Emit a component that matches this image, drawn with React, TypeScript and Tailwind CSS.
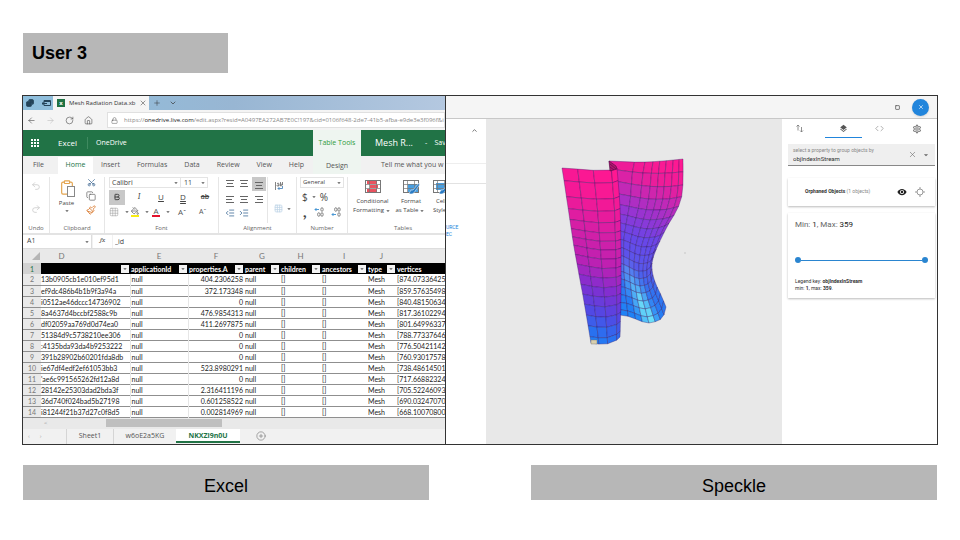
import React from 'react';
import {
  ArrowLeft, ArrowRight, Bold, ChevronDown, ChevronUp, CirclePlus, Clipboard, Code,
  Copy, Grid3x3, Home, Indent, Lock, Outdent, Paintbrush, PaintBucket, Plus, Redo2, RotateCw,
  Scissors, Square, Undo2, X,
} from 'lucide-react';
import { MdLayers, MdOutlineSettings, MdVisibility, MdArrowDropDown } from 'react-icons/md';

type Point = [number, number];

// ---------- sheet data ----------

const columns = [
  { letter: 'D', name: '', width: 'w-[89px]' },
  { letter: 'E', name: 'applicationId', width: 'w-[58px]' },
  { letter: 'F', name: 'properties.A', width: 'w-[56px]' },
  { letter: 'G', name: 'parent', width: 'w-[36px]' },
  { letter: 'H', name: 'children', width: 'w-[41px]' },
  { letter: 'I', name: 'ancestors', width: 'w-[46px]' },
  { letter: 'J', name: 'type', width: 'w-[29px]' },
  { letter: '', name: 'vertices', width: '' },
];

const rows = [
  ['13b0905cb1e010ef95d1', '404.2306258', '[874.07336425'],
  ['ef9dc486b4b1b9f3a94a', '372.173348', '[859.57635498'],
  ['i0512ae46dccc14736902', '0', '[840.48150634'],
  ['8a4637d4bccbf2588c9b', '476.9854313', '[817.36102294'],
  ['df02059aa769d0d74ea0', '411.2697875', '[801.64996337'],
  ['51384d9c5738210ee306', '0', '[788.77337646'],
  [':4135bda93da4b9253222', '0', '[776.50421142'],
  ['391b28902b60201fda8db', '0', '[760.93017578'],
  ['ie67df4edf2ef61053bb3', '523.8980291', '[738.48614501'],
  ["'ae6c991565262fd12a8d", '0', '[717.66882324'],
  ['28142e25303dad2bda3f', '2.316411196', '[705.52246093'],
  ['36d740f024bad5b27198', '0.601258522', '[690.03247070'],
  ['i81244f21b37d27c0f8d5', '0.002814969', '[668.10070800'],
];

const ribbonTabs = ['Insert', 'Formulas', 'Data', 'Review', 'View', 'Help'];

// ---------- mesh drawing ----------

// Catmull-Rom through evenly weighted points
const curve = (pts: Point[], t: number): Point => {
  const n = pts.length - 1;
  const i = Math.min(Math.floor(t * n), n - 1);
  const f = t * n - i;
  const p0 = pts[Math.max(i - 1, 0)];
  const p1 = pts[i];
  const p2 = pts[i + 1];
  const p3 = pts[Math.min(i + 2, n)];
  const at = (k: 0 | 1) =>
    0.5 * (2 * p1[k] + (p2[k] - p0[k]) * f + (2 * p0[k] - 5 * p1[k] + 4 * p2[k] - p3[k]) * f * f
      + (3 * p1[k] - p0[k] - 3 * p2[k] + p3[k]) * f * f * f);
  return [at(0), at(1)];
};

const mix = (stops: [number, number[]][], t: number) => {
  let i = 0;
  while (i < stops.length - 2 && t > stops[i + 1][0]) i++;
  const [a, ca] = stops[i];
  const [b, cb] = stops[i + 1];
  const f = Math.max(0, Math.min(1, (t - a) / (b - a)));
  return ca.map((c, k) => c + (cb[k] - c) * f);
};

interface Patch {
  left: Point[];
  right: Point[];
  top: Point[];
  bottom: Point[];
  us: number[];
  vs: number[];
  fan: number;
  color: (x: number, y: number) => number[];
}

const surfacePoint = (p: Patch, u0: number, v: number): Point => {
  // columns gather towards the right at the top and even out halfway down
  const u = Math.pow(u0, 1 - p.fan * Math.max(0, 1 - v * 2));
  const l = curve(p.left, v);
  const r = curve(p.right, v);
  const t = curve(p.top, u);
  const b = curve(p.bottom, u);
  const [tl, tr, bl, br] = [p.top[0], p.top[p.top.length - 1], p.bottom[0], p.bottom[p.bottom.length - 1]];
  const at = (k: 0 | 1) =>
    (1 - u) * l[k] + u * r[k] + (1 - v) * t[k] + v * b[k]
    - ((1 - u) * (1 - v) * tl[k] + u * (1 - v) * tr[k] + (1 - u) * v * bl[k] + u * v * br[k]);
  return [at(0), at(1)];
};

const steps = (n: number) => Array.from({ length: n + 1 }, (_, i) => i / n);

const front: Patch = {
  left: [[562, 168], [568, 207], [574, 247], [583, 296], [591, 343]],
  right: [[617, 168], [620, 207], [621, 250], [621, 295], [620, 337]],
  top: [[562, 168], [576, 169], [590, 170], [607, 171], [617, 168]],
  bottom: [[591, 343], [598, 344], [606, 344], [614, 342], [620, 337]],
  us: [0, 0.28, 0.55, 0.84, 1],
  vs: [0, 0.1, 0.19, 0.26, 0.33, 0.39, 0.44, 0.49, 0.54, 0.59, 0.64, 0.69, 0.74, 0.79, 0.84, 0.89, 0.95, 1],
  fan: 0,
  color: (x, y) =>
    mix([
      [168, [255, 24, 145]],
      [200, [242, 25, 151]],
      [235, [208, 32, 168]],
      [260, [190, 32, 178]],
      [285, [130, 46, 208]],
      [310, [82, 72, 228]],
      [330, [42, 112, 240]],
      [344, [30, 132, 246]],
    ], y - (x - 590) * 0.35),
};

const back: Patch = {
  left: [[609, 161], [616, 200], [618, 240], [619, 280], [620, 315]],
  right: [[683, 159], [683, 178], [682, 195], [677, 210], [668, 225], [659, 243], [653, 258], [652, 270], [655, 282], [661, 295], [666, 307]],
  top: [[609, 161], [627, 162], [645, 162], [663, 161], [683, 159]],
  bottom: [[620, 315], [631, 317], [640, 321], [649, 323], [657, 321], [663, 317], [666, 307]],
  us: steps(8),
  vs: [0, 0.07, 0.14, 0.21, 0.275, 0.335, 0.39, 0.44, 0.49, 0.54, 0.59, 0.64, 0.69, 0.74, 0.79, 0.84, 0.89, 0.945, 1],
  fan: 0.5,
  color: (x, y) => {
    const base = mix([
      [158, [255, 25, 145]],
      [180, [238, 28, 152]],
      [200, [198, 40, 180]],
      [222, [150, 52, 210]],
      [245, [105, 70, 232]],
      [275, [88, 88, 235]],
      [295, [50, 115, 240]],
      [322, [32, 130, 245]],
    ], y - (x - 660) * 0.35);
    // light streak running down the fold
    const d = Math.abs(x - (634 + (y - 285) * 0.45));
    const k = Math.max(0, 1 - d / 11) * Math.max(0, Math.min(1, (y - 255) / 55));
    return base.map((c, i) => c + ([120, 240, 250][i] - c) * k);
  },
};

const PatchCells: React.FC<{ patch: Patch }> = ({ patch }) => (
  <g stroke="#2a1060" strokeWidth="0.5" strokeOpacity="0.65" strokeLinejoin="round">
    {patch.vs.slice(1).map((v, r) =>
      patch.us.slice(1).map((u, c) => {
        const pts = [
          surfacePoint(patch, patch.us[c], patch.vs[r]),
          surfacePoint(patch, u, patch.vs[r]),
          surfacePoint(patch, u, v),
          surfacePoint(patch, patch.us[c], v),
        ];
        const cx = pts.reduce((s, p) => s + p[0], 0) / 4;
        const cy = pts.reduce((s, p) => s + p[1], 0) / 4;
        const rgb = patch.color(cx, cy).map(Math.round).join(',');
        return (
          <polygon key={`${r}-${c}`} fill={`rgb(${rgb})`} points={pts.map(p => `${p[0].toFixed(1)},${p[1].toFixed(1)}`).join(' ')} />
        );
      })
    )}
  </g>
);

const MeshDrawing: React.FC = () => (
  <svg viewBox="486 119 296 325" className="w-full h-full" role="img" aria-label="Radiation mesh">
    <PatchCells patch={back} />
    <PatchCells patch={front} />
    <path d="M609 161 L616 166 L617 169 L610 171 Z" fill="#b3146f" stroke="#4d0f45" strokeWidth="0.6" />
    <path d="M610 164 L616 169 M610 167 L614 170" stroke="#4d0f45" strokeWidth="0.6" />
    <path d="M591 340 h6 v4 h-6 z" fill="#d8cfae" stroke="#6b6b6b" strokeWidth="0.4" />
    <circle cx="685" cy="253" r="1" fill="#d2d2d2" />
  </svg>
);

// ---------- excel ----------

const Caret = () => <MdArrowDropDown className="size-2 shrink-0 text-[#555]" />;

const AlignLines: React.FC<{ d: string }> = ({ d }) => (
  <svg viewBox="0 0 10 10" className="size-[10px]" stroke="#666" strokeWidth="1" fill="none">
    <path d={d} />
  </svg>
);

const TableIcon: React.FC<{ kind: 'conditional' | 'format' | 'cell' }> = ({ kind }) => (
  <svg viewBox="0 0 18 16" className="w-[18px] h-4 shrink-0" fill="none">
    <rect x="1.5" y="1.5" width="15" height="12" fill="#fff" stroke="#777" />
    {kind === 'conditional' ? (
      <path d="M3 2h10v3h-10z M6 6h8v3h-8z M3 10h10v3h-10z" fill="#e8525f" />
    ) : (
      <path d={kind === 'format' ? 'M6 5h10v8h-10z' : 'M4 4h10v7h-10z'} fill="#4a9fe0" />
    )}
    <path d="M1.5 5.5h15M1.5 9.5h15M5.5 1.5v12M12.5 1.5v12" stroke="#777" strokeWidth="0.7" />
    {kind !== 'conditional' && (
      <path d="M17 4l-6 7-2 0-2 3.5q4 1.5 5.5-1.5l5-7z" fill="#2b7cc4" stroke="#fff" strokeWidth="0.5" />
    )}
  </svg>
);

const DecimalIcon: React.FC<{ flip?: boolean }> = ({ flip }) => (
  <svg viewBox="0 0 10 10" className="size-[10px]" fill="none" strokeWidth="0.9">
    <path d={flip ? 'M1 7.5h4M2.5 6L1 7.5 2.5 9' : 'M5 2.5H1M2.5 1L1 2.5 2.5 4'} stroke="#3a8fd0" />
    <ellipse cx="8" cy="2.5" rx="1.2" ry="1.8" stroke="#777" />
    <ellipse cx="8" cy="7.5" rx="1.2" ry="1.8" stroke="#777" />
    <ellipse cx="4.8" cy={flip ? 2.5 : 7.5} rx="1.2" ry="1.8" stroke="#777" />
  </svg>
);

const WrapIcon = () => (
  <svg viewBox="0 0 10 10" className="size-[10px]" fill="none" stroke="#666" strokeWidth="0.8">
    <path d="M1.5 1v8M8.500 1v3" />
    <path d="M3 2.500q2-1 2 .5v2M5 4q-2-.3-2 .7t2 0M6.500 1v4q1.500.3 1.500-1t-1.500-1" />
    <path d="M8.500 5v2.500H4M5.500 6L4 7.500 5.500 9" stroke="#3a7ab5" />
  </svg>
);

const Group: React.FC<{ label: string; className: string; children: React.ReactNode }> = ({ label, className, children }) => (
  <div className={`flex flex-col shrink-0 border-r border-[#e6e6e6] ${className}`}>
    <div className="grow flex min-h-0">{children}</div>
    <p className="h-[10px] shrink-0 leading-[10px] text-center text-[6px] text-[#666]">{label}</p>
  </div>
);

const Ribbon: React.FC = () => (
  <div className="flex h-[61px] shrink-0 bg-white pt-[3px] border-b-2 border-[#e3e3e3] overflow-hidden text-[#444]">
    <Group label="Undo" className="w-[27px]">
      <div className="flex flex-col items-center gap-[13px] w-full pt-1 text-[#ccc]">
        <button aria-label="Undo"><Undo2 className="size-[10px]" /></button>
        <button aria-label="Redo"><Redo2 className="size-[10px]" /></button>
      </div>
    </Group>
    <Group label="Clipboard" className="w-[55px]">
      <button className="flex flex-col items-center justify-start w-[33px] pt-[1px] text-[6px] leading-2">
        <span className="relative block mb-[2px]">
          <Clipboard className="w-4 h-[19px] text-[#e3a44e]" strokeWidth={1.75} />
          <span className="absolute right-0 bottom-0 w-2 h-[11px] border border-[#888] bg-white" />
        </span>
        Paste
        <Caret />
      </button>
      <div className="flex flex-col items-center gap-1 w-4 pt-[1px]">
        <button aria-label="Cut"><Scissors className="size-[9px] -rotate-90 text-[#466d97]" /></button>
        <button aria-label="Copy"><Copy className="size-[10px] text-[#666]" strokeWidth={1.75} /></button>
        <button aria-label="Format painter"><Paintbrush className="size-[10px] text-[#d9782d]" /></button>
      </div>
    </Group>
    <Group label="Font" className="w-[114px]">
      <div className="w-full pl-1">
        <div className="flex h-[11px] w-[99px] text-[7px] leading-[9px]">
          <button className="flex items-center justify-between w-[72px] pl-[2px] border border-[#e4e4e4]">Calibri<Caret /></button>
          <button className="flex items-center justify-between grow pl-[3px] border border-l-0 border-[#e4e4e4]">11<Caret /></button>
        </div>
        <div className="flex h-4 items-center mt-[1px] text-[8px]">
          <button aria-label="Bold" className="flex items-center justify-center w-4 h-[15px] bg-[#c8c8c8]"><Bold className="size-2" strokeWidth={3} /></button>
          <button className="w-7 font-serif italic">I</button>
          <button className="w-4 underline">U</button>
          <button className="w-7 underline decoration-double">D</button>
          <button className="w-4 text-[7px] font-semibold line-through">ab</button>
        </div>
        <div className="flex h-[14px] items-center text-[8px] text-[#555]">
          <button aria-label="Borders" className="flex items-center w-[22px] gap-1"><Grid3x3 className="size-[10px] text-[#999]" strokeWidth={1.25} /><Caret /></button>
          <button aria-label="Fill color" className="flex items-center w-[21px] gap-1">
            <span className="border-b-2 border-[#f8ec12]"><PaintBucket className="size-2" /></span><Caret />
          </button>
          <button aria-label="Font color" className="flex items-center w-[26px] gap-1">
            <span className="w-2 leading-2 border-b-2 border-[#e3122c]">A</span><Caret />
          </button>
          <button className="w-[21px] text-left">Aˆ</button>
          <button className="text-[7px]">Aˇ</button>
        </div>
      </div>
    </Group>
    <Group label="Alignment" className="w-[78px]">
      <div className="grid grid-cols-3 w-[49px] content-start pl-1 pr-[1px] border-r border-[#e6e6e6]">
        <button aria-label="Top align" className="flex items-center justify-center h-4 pb-1"><AlignLines d="M1 2.5h8M2 5.5h6M1 8.5h8" /></button>
        <button aria-label="Middle align" className="flex items-center justify-center h-4 pb-1"><AlignLines d="M1 2.5h8M2 5.5h6M1 8.5h8" /></button>
        <button aria-label="Bottom align" className="flex items-center justify-center h-[14px] bg-[#c8c8c8]"><AlignLines d="M1 3.5h8M2 6.5h6M1 9.5h8" /></button>
        <button aria-label="Align left" className="flex items-center justify-center h-[13px]"><AlignLines d="M1 1.5h8M1 4.5h6M1 7.5h8" /></button>
        <button aria-label="Center" className="flex items-center justify-center h-[13px]"><AlignLines d="M1 1.5h8M2 4.5h6M1 7.5h8" /></button>
        <button aria-label="Align right" className="flex items-center justify-center h-[13px]"><AlignLines d="M1 1.5h8M3 4.5h6M1 7.5h8" /></button>
        <button aria-label="Outdent" className="flex items-center justify-center h-[14px]"><Outdent className="size-[10px] text-[#44709a]" /></button>
        <button aria-label="Indent" className="flex items-center justify-center h-[14px]"><Indent className="size-[10px] text-[#44709a]" /></button>
      </div>
      <div className="flex flex-col grow gap-[13px] pt-1 pl-[6px]">
        <button aria-label="Wrap text"><WrapIcon /></button>
        <button aria-label="Merge" className="flex items-center gap-[2px]"><Grid3x3 className="size-[9px] text-[#bcd3e6]" /><Caret /></button>
      </div>
    </Group>
    <Group label="Number" className="w-[51px]">
      <div className="w-full px-[3px]">
        <button className="flex w-full h-[11px] items-center justify-between pl-[2px] border border-[#e4e4e4] text-[6px]">General<Caret /></button>
        <div className="flex items-center h-[18px] gap-[2px] pl-[2px] text-[10px]">
          <button>$</button><Caret /><button>%</button>
        </div>
        <div className="flex items-center h-3 justify-between px-[3px]">
          <button className="font-serif font-bold text-[16px] leading-3 h-[18px]">,</button>
          <button aria-label="Increase decimal"><DecimalIcon /></button>
          <button aria-label="Decrease decimal"><DecimalIcon flip /></button>
        </div>
      </div>
    </Group>
    <div className="flex flex-col shrink-0 w-[110px]">
      <div className="grow flex pt-[2px] pl-[2px] text-[6px] leading-[9px]">
        <button className="flex flex-col items-center justify-start gap-[2px] w-[45px] shrink-0 whitespace-nowrap">
          <TableIcon kind="conditional" />
          <span>Conditional<span className="flex items-center">Formatting<Caret /></span></span>
        </button>
        <button className="flex flex-col items-center justify-start gap-[2px] w-[32px] shrink-0 whitespace-nowrap">
          <TableIcon kind="format" />
          <span>Format<span className="flex items-center">as Table<Caret /></span></span>
        </button>
        <button className="flex flex-col items-center justify-start gap-[2px] w-[28px] shrink-0 whitespace-nowrap">
          <TableIcon kind="cell" />
          <span>Cell<span className="block">Styles</span></span>
        </button>
      </div>
      <p className="h-[10px] leading-[10px] text-center text-[6px] text-[#666]">Tables</p>
    </div>
  </div>
);

const Sheet: React.FC = () => (
  <div className="shrink-0 overflow-hidden bg-white">
    <table className="w-full table-fixed border-collapse whitespace-nowrap font-[Lato,sans-serif] text-[7px] leading-[10px] text-[#222]">
      <thead>
        <tr className="h-[14px] bg-[#e9e9e9] text-[8px] text-[#777]">
          <th className="w-[18px] p-0">
            <svg viewBox="0 0 8 8" className="ml-auto mr-[1px] size-2"><path d="M8 0V8H0Z" fill="#b5b5b5" /></svg>
          </th>
          {columns.map(col => (
            <th key={col.name} className={`p-0 font-normal ${col.width} ${col.letter === 'D' ? 'pr-12' : ''}`}>{col.letter}</th>
          ))}
        </tr>
        <tr className="h-[11px] bg-black text-white">
          <th className="p-0 font-normal bg-[#d2d2d2] text-[#217346]">1</th>
          {columns.map(col => (
            <th key={col.name} className="p-0 pl-[1px] text-left font-bold overflow-hidden">
              <div className="flex items-center justify-between">
                <span>{col.name}</span>
                {col.letter && (
                  <button aria-label={`Filter ${col.name || col.letter}`} className="flex items-center justify-center w-2 h-2 mr-[1px] shrink-0 bg-[#f3f3f3]"><Caret /></button>
                )}
              </div>
            </th>
          ))}
        </tr>
      </thead>
      <tbody>
        {rows.map(([id, radiation, vertices], i) => (
          <tr key={id} className="h-[11px] border-b border-[#8f8f8f]">
            <th className="p-0 font-normal bg-[#e9e9e9] text-[#777]">{i + 2}</th>
            <td className="p-0 overflow-hidden border-r border-r-[#e6e6e6]">{id}</td>
            <td className="p-0 pl-[1px] border-r border-r-[#e6e6e6]">null</td>
            <td className="p-0 pr-[1px] text-right">{radiation}</td>
            <td className="p-0 pl-[1px]">null</td>
            <td className="p-0 pl-[1px]">[]</td>
            <td className="p-0 pl-[1px]">[]</td>
            <td className="p-0 pl-[1px]">Mesh</td>
            <td className="p-0 pl-[1px] overflow-hidden">{vertices}</td>
          </tr>
        ))}
      </tbody>
    </table>
  </div>
);

const ExcelWindow: React.FC = () => (
  <section className="flex flex-col min-w-0 overflow-hidden border-r border-[#333] bg-[#f1f1f1] font-['Open_Sans',sans-serif]">
    {/* Browser tabs */}
    <div className="flex h-[14px] shrink-0 items-stretch bg-linear-to-r from-[#8ebfdd] via-[#98b6d3] to-[#b4c8e0] text-[#333]">
      <div className="flex items-center gap-2 w-[30px] pl-[3px]">
        <Copy className="size-2 -scale-x-100 text-[#24445a]" strokeWidth={3} fill="#24445a" />
        <svg viewBox="0 0 9 8" className="w-[9px] h-2" fill="none" stroke="#24445a"><path d="M2 1.500h6.500v5H2zM2 2.500h6.500" /><path d="M5 4.500H0M1.500 3L0 4.500 1.500 6" /></svg>
      </div>
      <div className="flex items-center gap-1 w-[96px] pl-1 bg-[#f5f5f5] text-[6px] whitespace-nowrap">
        <span className="flex items-center justify-center size-2 shrink-0 bg-[#1f7244] text-white font-bold">x</span>
        <span className="grow">Mesh Radiation Data.xb</span>
        <button aria-label="Close tab" className="mr-1"><X className="size-2" strokeWidth={1.5} /></button>
      </div>
      <div className="flex items-center gap-2 pl-1">
        <button aria-label="New tab"><Plus className="size-2" strokeWidth={1.5} /></button>
        <button aria-label="Tab list"><ChevronDown className="size-2" strokeWidth={2} /></button>
      </div>
    </div>

    {/* Address bar */}
    <div className="flex h-5 shrink-0 items-center bg-[#f4f4f4] text-[#444]">
      <div className="flex shrink-0 items-center gap-[10px] w-[84px] pl-1">
        <button aria-label="Back"><ArrowLeft className="size-[9px]" strokeWidth={1.5} /></button>
        <button aria-label="Forward"><ArrowRight className="size-[9px] text-[#bbb]" strokeWidth={1.5} /></button>
        <button aria-label="Refresh"><RotateCw className="size-[9px]" strokeWidth={1.5} /></button>
        <button aria-label="Home"><Home className="size-[9px]" strokeWidth={1.5} /></button>
      </div>
      <div className="flex items-center grow min-w-0 h-4 pl-[3px] bg-white border border-[#e0e0e0] text-[6px] whitespace-nowrap">
        <Lock className="size-[7px] shrink-0 mr-[6px]" strokeWidth={1.5} />
        <p className="text-[#888]">
          https://<span className="text-[#222]">onedrive.live.com</span>/edit.aspx?resid=A0497EA272AB7E0C!197&amp;cid=0106f648-2de7-41b5-afba-e9de3e3f096f&amp;i
        </p>
      </div>
    </div>

    {/* Green title bar */}
    <div className="flex h-[26px] shrink-0 items-center overflow-hidden whitespace-nowrap bg-[#217346] text-white text-[7px]">
      <button aria-label="Apps" className="grid grid-cols-3 gap-[1px] shrink-0 ml-2">
        {[1, 2, 3, 4, 5, 6, 7, 8, 9].map(n => <span key={n} className="w-[2px] h-[2px] bg-white" />)}
      </button>
      <span className="w-[30px] ml-[19px] shrink-0 text-[8px] border-r border-[#3f8a60]">Excel</span>
      <a href="#onedrive" className="grow ml-2">OneDrive</a>
      <span className="flex items-center justify-center w-[48px] h-full shrink-0 bg-[#eef5f0] text-[#2f9c3c]">Table Tools</span>
      <span className="flex items-center w-[84px] pl-[14px] shrink-0">
        <span className="w-[50px] shrink-0 text-[9px]">Mesh R...</span>
        <span>- &nbsp; &nbsp;Sav</span>
      </span>
    </div>

    {/* Ribbon tabs */}
    <div className="flex h-[18px] shrink-0 items-stretch whitespace-nowrap overflow-hidden text-[7px] text-[#555]">
      <button className="w-[35px] pr-1">File</button>
      <button className="w-[35px] mt-[1px] bg-white text-[#217346]">Home</button>
      <div className="flex gap-[1px]">
        {ribbonTabs.map(tab => (
          <button key={tab} className="px-2">{tab}</button>
        ))}
      </div>
      <button className="w-[48px] pt-[2px] ml-auto shrink-0 bg-[#eef5f0]">Design</button>
      <button className="w-[84px] pl-5 shrink-0 text-left overflow-hidden">Tell me what you w</button>
    </div>

    <Ribbon />

    {/* Formula bar */}
    <div className="flex h-[14px] shrink-0 items-center border-b border-[#ddd] bg-[#f1f1f1] text-[7px] text-[#444]">
      <button className="flex items-center justify-between w-[69px] h-[13px] pl-1 bg-white border-r border-[#ddd]">A1<Caret /></button>
      <span className="w-[19px] h-[13px] ml-[1px] text-center font-serif italic bg-white">fx</span>
      <input aria-label="Formula" defaultValue="_id" className="grow min-w-0 h-[13px] ml-[1px] pl-[2px] bg-white outline-none" />
    </div>

    <Sheet />

    {/* Scrollbar */}
    <div className="flex h-[11px] shrink-0 items-center bg-[#e9e9e9] pl-[21px] text-[6px] text-[#999]">
      <span className="w-[62px]">&lt;</span>
      <span className="w-[116px] h-2 bg-[#bfbfbf]" />
    </div>

    {/* Sheet tabs */}
    <div className="flex h-[15px] items-stretch text-[7px] text-[#555]">
      <span className="flex items-center w-[43px] pl-[5px] gap-[10px] text-[6px] text-[#aaa]"><span>‹</span><span>›</span></span>
      <button className="w-[48px] border-x border-[#d5d5d5]">Sheet1</button>
      <button className="w-[62px]">w6oE2a5KG</button>
      <button className="w-[64px] h-[14px] pt-[2px] border-b-2 border-[#217346] bg-white font-bold text-[#217346]">NKXZi9n0U</button>
      <button aria-label="New sheet" className="ml-[16px]"><CirclePlus className="size-[10px] text-[#777]" strokeWidth={1.5} /></button>
    </div>
  </section>
);

// ---------- speckle ----------

const SpeckleWindow: React.FC = () => (
  <section className="flex flex-col min-w-0 overflow-hidden bg-white font-[Roboto,sans-serif]">
    <header className="flex h-[23px] shrink-0 items-center justify-end gap-3 pr-2 bg-[#f5f5f5] border-b border-[#c8c8c8]">
      <button aria-label="Restore"><Square className="size-[5px] text-[#666]" strokeWidth={4} /></button>
      <button aria-label="Close" className="flex items-center justify-center size-[17px] rounded-full bg-[#2185dc] text-white shadow">
        <X className="size-[6px]" strokeWidth={2.5} />
      </button>
    </header>
    <div className="grow flex min-h-0">
      <div className="w-10 shrink-0 text-[5px] leading-[7px]">
        <div className="flex h-[45px] justify-end items-start pt-2 pr-2 border-b border-[#eee]">
          <button aria-label="Collapse"><ChevronUp className="size-[7px] text-[#666]" strokeWidth={3} /></button>
        </div>
        <div className="h-5 mb-[40px] border-b border-[#e2e2e2]" />
        <a href="#source" className="block text-[#2185dc]">URCE</a>
        <a href="#source" className="block text-[#2185dc]">EC</a>
      </div>
      <div className="grow min-w-0 bg-[#e8e8e8]">
        <MeshDrawing />
      </div>
      <aside className="w-[155px] shrink-0 pl-[6px] pr-[2px] text-[#333]">
        <nav className="grid grid-cols-4 w-full h-[19px] text-[#757575]">
          <button aria-label="Sort" className="flex items-center justify-center pr-3">
            <svg viewBox="0 0 8 9" className="w-2 h-[9px]" fill="none" stroke="currentColor" strokeWidth="0.8"><path d="M2 6.500V1M0.500 2.500L2 1l1.500 1.500M5.500 3v5M4 6.500L5.500 8 7 6.500" /></svg>
          </button>
          <button aria-label="Layers" className="flex items-center justify-center border-b border-[#2185dc] text-[#555]"><MdLayers className="size-[9px]" /></button>
          <button aria-label="Code" className="flex items-center justify-center"><Code className="size-[9px]" strokeWidth={1.5} /></button>
          <button aria-label="Settings" className="flex items-center justify-center"><MdOutlineSettings className="size-[10px]" /></button>
        </nav>
        <div className="flex items-center h-[22px] mt-[6px] pl-[5px] pr-1 bg-[#efefef] border-b border-[#888]">
          <div className="grow min-w-0 pt-[1px]">
            <label htmlFor="group-by" className="block text-[5px] leading-[7px] text-[#888]">select a property to group objects by</label>
            <input id="group-by" defaultValue="objIndexInStream" className="block w-full h-[9px] text-[6px] outline-none" />
          </div>
          <button aria-label="Clear"><X className="size-[9px] text-[#666]" strokeWidth={1.5} /></button>
          <MdArrowDropDown className="ml-1 size-[10px] text-[#666]" />
        </div>
        <div className="flex items-center h-[28px] mt-3 pl-[17px] pr-[10px] shadow-[0_1px_2px_#bbb]">
          <p className="grow text-[5px]"><b>Orphaned Objects</b> <span className="text-[#888]">(1 objects)</span></p>
          <button aria-label="Toggle visibility"><MdVisibility className="size-[10px] text-[#222]" /></button>
          <button aria-label="Isolate" className="ml-2">
            <svg viewBox="0 0 10 10" className="size-[10px]" fill="none" stroke="#999"><circle cx="5" cy="5" r="3" /><path d="M5 0v2M5 8v2M0 5h2M8 5h2" /></svg>
          </button>
        </div>
        <div className="h-[85px] mt-[7px] px-[7px] pt-[6px] shadow-[0_1px_2px_#bbb]">
          <h3 className="text-[8px] leading-3 text-[#666]">Min: <span className="text-[#222]">1</span>, Max: <span className="text-[#222]">359</span></h3>
          <div className="flex items-center h-[6px] mt-[26px] mb-[15px]">
            <span className="size-[6px] rounded-full bg-[#2a85d0]" />
            <span className="grow h-[1px] bg-[#2a85d0]" />
            <span className="size-[6px] rounded-full bg-[#2a85d0]" />
          </div>
          <p className="text-[5px] leading-[7px]">Legend key: <b>objIndexInStream</b></p>
          <p className="text-[5px] leading-[7px]">min: <b>1</b>, max: <b>359</b>.</p>
        </div>
      </aside>
    </div>
  </section>
);

const App: React.FC = () => {
  return (
    <main className="bg-white px-[22px] pt-[33px] pb-10 font-['Liberation_Sans',sans-serif] text-black">
      <h1 className="flex items-center w-[205px] h-[40px] ml-[1px] pl-[9px] bg-[#b7b7b7] text-[18px] font-bold">User 3</h1>
      <div className="grid grid-cols-[423fr_491fr] mt-[22px] border border-[#333]">
        <ExcelWindow />
        <SpeckleWindow />
      </div>
      <div className="flex justify-between mt-5 mx-[1px] text-[18px] text-center">
        <h2 className="w-[44.4%] h-[35px] pt-2 bg-[#b7b7b7]">Excel</h2>
        <h2 className="w-[44.4%] h-[35px] pt-2 bg-[#b7b7b7]">Speckle</h2>
      </div>
    </main>
  );
};

export default App;
